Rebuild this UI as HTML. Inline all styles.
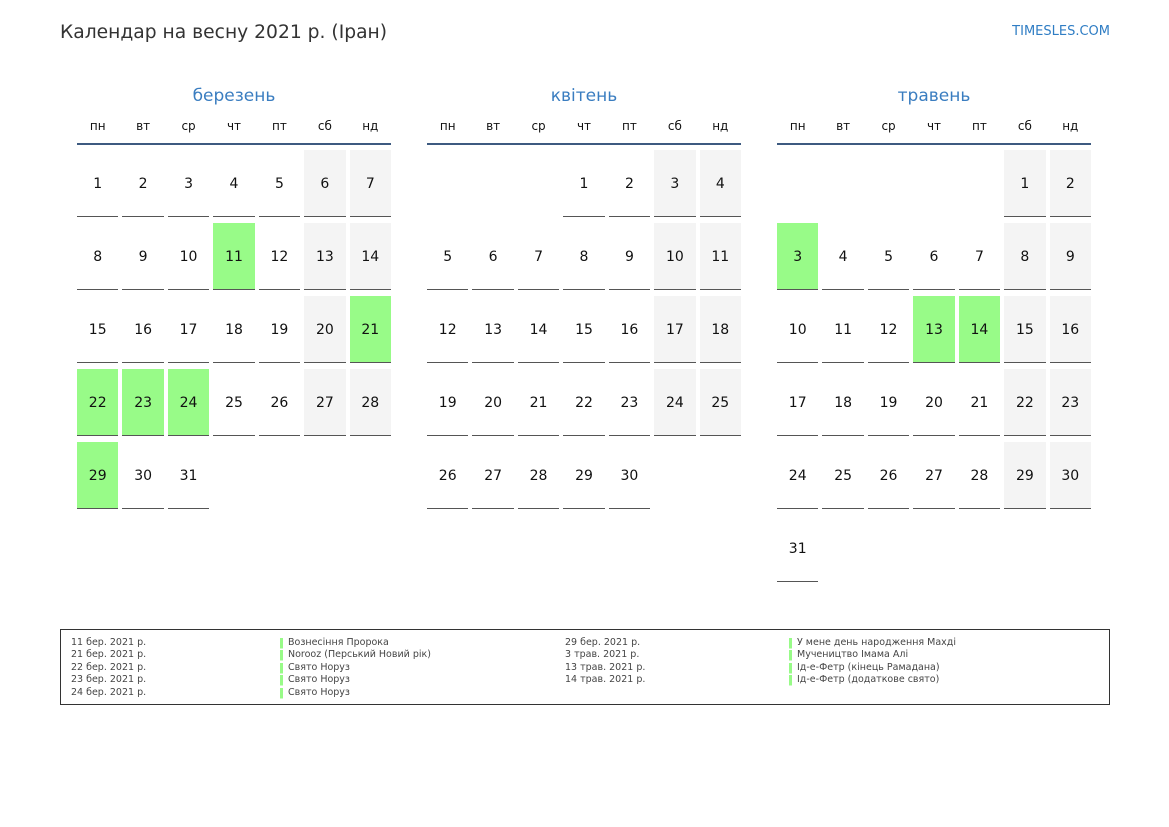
<!DOCTYPE html>
<html><head><meta charset="utf-8"><style>
*{margin:0;padding:0;box-sizing:border-box}
body{width:1169px;height:827px;background:#fff;font-family:"DejaVu Sans","Liberation Sans",sans-serif;position:relative;overflow:hidden;color:#111}
.title{position:absolute;left:60px;top:22px;font-size:18.7px;color:#333;white-space:nowrap}
.logo{position:absolute;right:59px;top:24px;font-size:13px;color:#2f7dc4}
.m{position:absolute;top:85px;width:314px}
.mn{text-align:center;font-size:17px;color:#3a7dc0;height:22px;line-height:22px}
.wd{display:grid;grid-template-columns:repeat(7,1fr);column-gap:4px;margin-top:11px;font-size:12px;text-align:center;height:25px;line-height:16px}
.ln{height:2px;background:#3d5a80}
.g{display:grid;grid-template-columns:repeat(7,1fr);column-gap:4px;row-gap:6px;margin-top:5px;grid-auto-rows:67px}
.g div{font-size:14px;display:flex;align-items:center;justify-content:center;border-bottom:1.5px solid #555;padding-top:1px}
.g .e{border:none}
.g .w{background:#f4f4f4}
.g .h{background:#98fb88}
.leg{position:absolute;left:60px;top:629px;width:1050px;height:76px;border:1.5px solid #333}
.leg div{position:absolute;font-size:9.5px;color:#444;line-height:12.4px;white-space:nowrap;top:7px}
.bar{background:linear-gradient(#98fb88,#98fb88) no-repeat 0 1px/3px 10.5px;padding-left:8px;height:12.4px;line-height:12.4px}
</style></head><body>
<div class="title">Календар на весну 2021 р. (Іран)</div>
<div class="logo">TIMESLES.COM</div>

<div class="m" style="left:77px">
<div class="mn">березень</div>
<div class="wd"><span>пн</span><span>вт</span><span>ср</span><span>чт</span><span>пт</span><span>сб</span><span>нд</span></div>
<div class="ln"></div>
<div class="g">
<div>1</div><div>2</div><div>3</div><div>4</div><div>5</div><div class="w">6</div><div class="w">7</div>
<div>8</div><div>9</div><div>10</div><div class="h">11</div><div>12</div><div class="w">13</div><div class="w">14</div>
<div>15</div><div>16</div><div>17</div><div>18</div><div>19</div><div class="w">20</div><div class="h">21</div>
<div class="h">22</div><div class="h">23</div><div class="h">24</div><div>25</div><div>26</div><div class="w">27</div><div class="w">28</div>
<div class="h">29</div><div>30</div><div>31</div>
</div></div>

<div class="m" style="left:427px">
<div class="mn">квітень</div>
<div class="wd"><span>пн</span><span>вт</span><span>ср</span><span>чт</span><span>пт</span><span>сб</span><span>нд</span></div>
<div class="ln"></div>
<div class="g">
<div class="e"></div><div class="e"></div><div class="e"></div><div>1</div><div>2</div><div class="w">3</div><div class="w">4</div>
<div>5</div><div>6</div><div>7</div><div>8</div><div>9</div><div class="w">10</div><div class="w">11</div>
<div>12</div><div>13</div><div>14</div><div>15</div><div>16</div><div class="w">17</div><div class="w">18</div>
<div>19</div><div>20</div><div>21</div><div>22</div><div>23</div><div class="w">24</div><div class="w">25</div>
<div>26</div><div>27</div><div>28</div><div>29</div><div>30</div>
</div></div>

<div class="m" style="left:777px">
<div class="mn">травень</div>
<div class="wd"><span>пн</span><span>вт</span><span>ср</span><span>чт</span><span>пт</span><span>сб</span><span>нд</span></div>
<div class="ln"></div>
<div class="g">
<div class="e"></div><div class="e"></div><div class="e"></div><div class="e"></div><div class="e"></div><div class="w">1</div><div class="w">2</div>
<div class="h">3</div><div>4</div><div>5</div><div>6</div><div>7</div><div class="w">8</div><div class="w">9</div>
<div>10</div><div>11</div><div>12</div><div class="h">13</div><div class="h">14</div><div class="w">15</div><div class="w">16</div>
<div>17</div><div>18</div><div>19</div><div>20</div><div>21</div><div class="w">22</div><div class="w">23</div>
<div>24</div><div>25</div><div>26</div><div>27</div><div>28</div><div class="w">29</div><div class="w">30</div>
<div>31</div>
</div></div>

<div class="leg">
<div style="left:10px">11 бер. 2021 р.<br>21 бер. 2021 р.<br>22 бер. 2021 р.<br>23 бер. 2021 р.<br>24 бер. 2021 р.</div>
<div style="left:219px"><p class="bar">Вознесіння Пророка</p><p class="bar">Norooz (Перський Новий рік)</p><p class="bar">Свято Норуз</p><p class="bar">Свято Норуз</p><p class="bar">Свято Норуз</p></div>
<div style="left:504px">29 бер. 2021 р.<br>3 трав. 2021 р.<br>13 трав. 2021 р.<br>14 трав. 2021 р.</div>
<div style="left:728px"><p class="bar">У мене день народження Махді</p><p class="bar">Мучеництво Імама Алі</p><p class="bar">Ід-е-Фетр (кінець Рамадана)</p><p class="bar">Ід-е-Фетр (додаткове свято)</p></div>
</div>
</body></html>
